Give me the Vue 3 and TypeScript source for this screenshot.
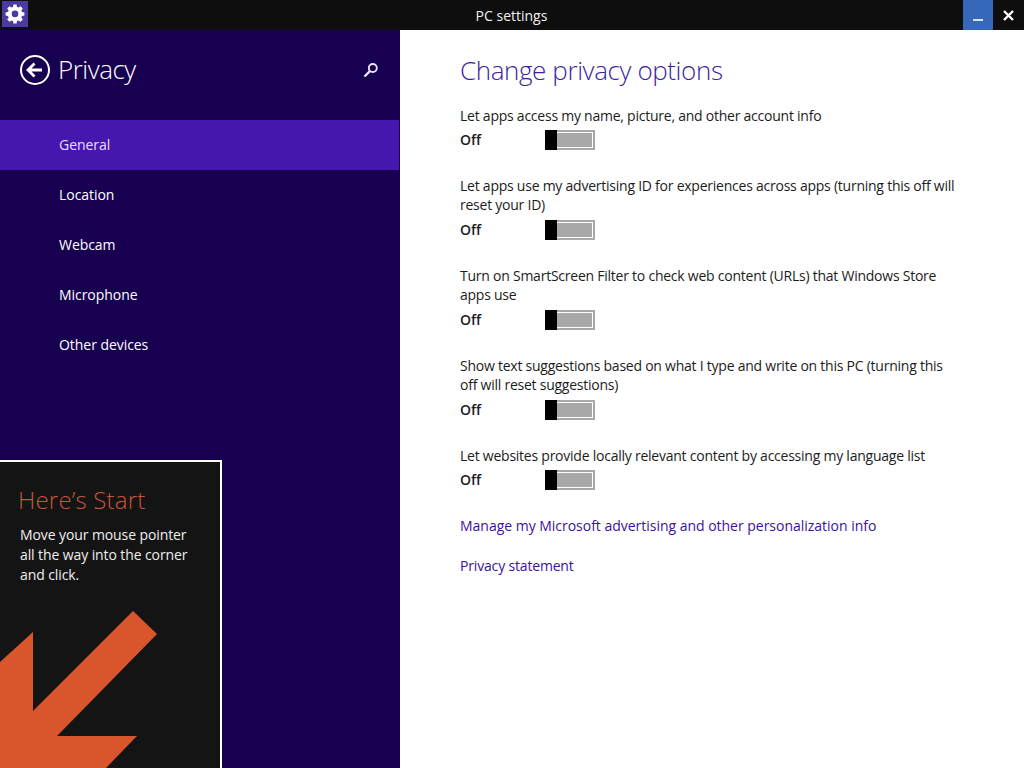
<script setup lang="ts">
interface PrivacyOption {
  text: string
  wraps: boolean
}
const navItems: string[] = ['General', 'Location', 'Webcam', 'Microphone', 'Other devices']
const options: PrivacyOption[] = [
  { text: 'Let apps access my name, picture, and other account info', wraps: false },
  { text: 'Let apps use my advertising ID for experiences across apps (turning this off will reset your ID)', wraps: true },
  { text: 'Turn on SmartScreen Filter to check web content (URLs) that Windows Store apps use', wraps: true },
  { text: 'Show text suggestions based on what I type and write on this PC (turning this off will reset suggestions)', wraps: true },
  { text: 'Let websites provide locally relevant content by accessing my language list', wraps: false },
]
</script>

<template>
  <div class="app">
    <header class="titlebar">
      <div class="app-icon">
        <svg width="20" height="20" viewBox="0 0 20 20">
          <path fill="#fff" fill-rule="evenodd" d="M8.400 1h3.200l.4 2.400 1.500.6 2-1.400 2.300 2.300-1.400 2 .6 1.500 2.400.4v3.200l-2.400.4-.6 1.500 1.400 2-2.300 2.300-2-1.400-1.500.6-.4 2.400H8.400L8 17.400l-1.500-.6-2 1.400-2.300-2.300 1.400-2-.6-1.500L.6 12V8.800L3 8.400l.6-1.500-1.400-2 2.300-2.300 2 1.400L8 3.400zM10 7a3.300 3.300 0 1 0 0 6.600A3.300 3.300 0 0 0 10 7z" transform="translate(0 -.4)"/>
        </svg>
      </div>
      <div class="title">PC settings</div>
      <div class="win-btn minimize"><span class="min-glyph"></span></div>
      <div class="win-btn close">
        <svg width="11" height="11" viewBox="0 0 11 11"><path d="M1 1l9 9M10 1l-9 9" stroke="#fff" stroke-width="2.400"/></svg>
      </div>
    </header>

    <div class="body">
      <aside class="pane">
        <div class="pane-head">
          <svg class="back" width="30" height="30" viewBox="0 0 30 30" fill="none" stroke="#fff">
            <circle cx="15" cy="15" r="14" stroke-width="2"/>
            <path d="M8 15h14M14.500 8.500L8 15l6.500 6.500" stroke-width="2.800"/>
          </svg>
          <h1 class="pane-title">Privacy</h1>
          <svg class="search" width="16" height="16" viewBox="0 0 16 16" fill="none" stroke="#eee6ff">
            <circle cx="9.800" cy="6" r="4" stroke-width="1.800"/>
            <path d="M7 9L1.500 14.500" stroke-width="2.400"/>
          </svg>
        </div>
        <nav class="nav">
          <div v-for="(item, i) in navItems" :key="item" class="nav-item" :class="{ active: i === 0 }">{{ item }}</div>
        </nav>
        <section class="tip">
          <h2 class="tip-title">Here’s Start</h2>
          <p class="tip-text">Move your mouse pointer<br />all the way into the corner<br />and click.</p>
          <svg class="arrow" width="220" height="158" viewBox="0 0 220 158">
            <polygon fill="#d9562c" points="133,1 157,24 57,126 137,126 106,158 0,158 0,52 33,22 33,101" />
          </svg>
        </section>
      </aside>

      <main class="content">
        <h1 class="heading">Change privacy options</h1>
        <div v-for="opt in options" :key="opt.text" class="option" :class="{ wraps: opt.wraps }">
          <p class="opt-label">{{ opt.text }}</p>
          <div class="opt-row">
            <span class="opt-state">Off</span>
            <span class="toggle"><span class="thumb"></span><span class="fill"></span></span>
          </div>
        </div>
        <a class="link first">Manage my Microsoft advertising and other personalization info</a>
        <a class="link second">Privacy statement</a>
      </main>
    </div>
  </div>
</template>

<style>
html, body { margin: 0; padding: 0; background: #fff; }
</style>

<style scoped>
.app {
  width: 1024px;
  height: 768px;
  display: flex;
  flex-direction: column;
  overflow: hidden;
  font-family: "Open Sans", "Noto Sans", sans-serif;
}
.titlebar {
  height: 30px;
  flex: none;
  display: flex;
  align-items: center;
  background: #0e0e0e;
  color: #f0f0f0;
}
.app-icon {
  width: 26px;
  height: 26px;
  margin-bottom: 2px;
  margin-left: 2px;
  background: #4d3a9e;
  display: flex;
  align-items: center;
  justify-content: center;
}
.title {
  flex: 1;
  text-align: center;
  font-size: 14px;
  letter-spacing: 0;
  padding-left: 32px;
}
.win-btn {
  height: 30px;
  display: flex;
  align-items: center;
  justify-content: center;
}
.minimize {
  width: 30px;
  background: #3667b8;
}
.min-glyph {
  width: 10px;
  height: 2px;
  margin-top: 9px;
  background: #cfe6ff;
}
.close {
  width: 31px;
}
.body {
  flex: 1;
  display: flex;
  min-height: 0;
}
.pane {
  width: 400px;
  flex: none;
  background: #170050;
  color: #fff;
  display: flex;
  flex-direction: column;
}
.pane-head {
  height: 90px;
  flex: none;
  display: flex;
  align-items: center;
  padding: 0 21px 10px 20px;
  box-sizing: border-box;
}
.back {
  margin-right: 8px;
}
.pane-title {
  flex: 1;
  margin: 0 0 2px;
  font-size: 26px;
  font-weight: 300;
  letter-spacing: -0.5px;
}
.nav {
  display: flex;
  flex-direction: column;
}
.nav-item {
  width: 399px;
  height: 50px;
  line-height: 50px;
  padding-left: 59px;
  box-sizing: border-box;
  font-size: 14px;
  letter-spacing: -0.05px;
}
.nav-item.active {
  background: #4617ae;
  color: #eadfff;
}
.tip {
  margin-top: auto;
  width: 222px;
  height: 308px;
  box-sizing: border-box;
  border-top: 2px solid #fff;
  border-right: 2px solid #fff;
  background: #141414;
  display: flex;
  flex-direction: column;
  overflow: hidden;
}
.tip-title {
  margin: 21px 0 0 18px;
  font-size: 24px;
  line-height: 34px;
  font-weight: 300;
  color: #c8543a;
  letter-spacing: 0.2px;
}
.tip-text {
  margin: 8px 0 0 20px;
  font-size: 14px;
  line-height: 20px;
  letter-spacing: -0.1px;
  color: #eee;
}
.arrow {
  margin-top: auto;
  display: block;
}
.content {
  flex: 1;
  background: #fff;
  padding: 0 0 0 60px;
  color: #1c1c1c;
}
.heading {
  margin: 0;
  height: 76px;
  padding-top: 21px;
  box-sizing: border-box;
  font-size: 26px;
  line-height: 38px;
  font-weight: 300;
  color: #3d1fa0;
  letter-spacing: -0.4px;
}
.option {
  width: 499px;
  margin-bottom: 26px;
}
.opt-label {
  margin: 0;
  font-size: 14px;
  line-height: 19px;
  letter-spacing: -0.24px;
}
.opt-row {
  display: flex;
  align-items: center;
  height: 20px;
  margin-top: 5px;
}
.wraps .opt-row {
  margin-top: 6px;
}
.opt-state {
  width: 85px;
  margin-bottom: 2px;
  font-size: 14px;
  font-weight: 600;
  letter-spacing: -0.1px;
}
.toggle {
  width: 50px;
  height: 20px;
  box-sizing: border-box;
  border: 2px solid #a8a8a8;
  display: flex;
  background: #fff;
}
.fill {
  flex: 1;
  margin: 1px 1px 1px 0;
  background: #a8a8a8;
}
.thumb {
  width: 12px;
  height: 20px;
  margin: -2px 0 -2px -2px;
  background: #000;
  flex: none;
}
.link {
  display: block;
  font-size: 14px;
  line-height: 20px;
  color: #3a129e;
}
.link.first {
  letter-spacing: -0.02px;
}
.link.second {
  margin-top: 20px;
  letter-spacing: -0.17px;
}
</style>
